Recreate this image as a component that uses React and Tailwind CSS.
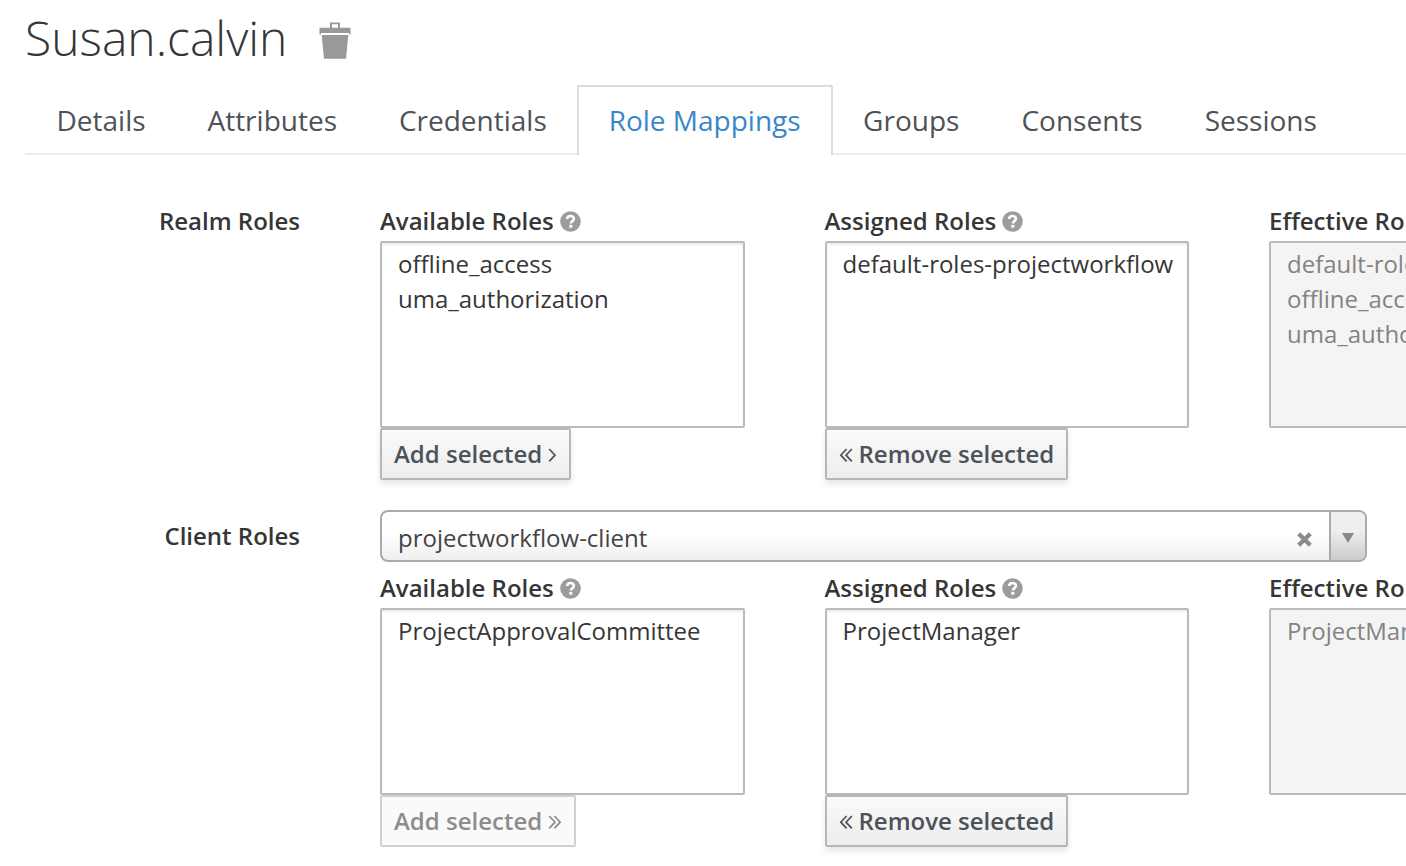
import React from "react";

const tabs = ["Details", "Attributes", "Credentials", "Role Mappings", "Groups", "Consents", "Sessions"];

function HelpIcon() {
  return (
    <svg className="ml-[6px] h-[21px] w-[21px] shrink-0" viewBox="0 0 21 21">
      <circle cx="10.5" cy="10.5" r="10.3" fill="#9c9c9c" />
      <path d="M7.1 8C7.3 5.9 8.6 5 10.5 5c2 0 3.4 1.1 3.4 2.8 0 2.3-3 2.4-3 4.6" fill="none" stroke="#fff" strokeWidth="2.6" />
      <rect x="9.3" y="13.9" width="3" height="2.8" fill="#fff" />
    </svg>
  );
}

function Chevron({ dir, double }) {
  const d = double ? "M1.2 1 7 7.2 1.2 13.4M6.4 1l5.8 6.2-5.8 6.2" : "M1.2 1 7 7.2 1.2 13.4";
  return (
    <svg
      className={`mt-[2px] h-[15px] shrink-0 ${double ? "w-[14px]" : "w-[9px]"} ${dir === "left" ? "-scale-x-100" : ""}`}
      viewBox={double ? "0 0 14 15" : "0 0 9 15"}
      fill="none"
      stroke="currentColor"
      strokeWidth="1.7"
    >
      <path d={d} />
    </svg>
  );
}

function RoleButton({ label, dir, double, disabled }) {
  return (
    <button
      disabled={disabled}
      className={`flex h-[52px] items-center gap-[6px] self-start rounded-[2px] border-2 px-3 font-semibold whitespace-nowrap ${
        disabled
          ? "border-[#d1d1d1] bg-[#fafafa] text-[#8b8d8f]"
          : "border-[#b7b7b7] bg-linear-to-b from-[#fafafa] to-[#ededed] text-[#4d5258] shadow-[0_4px_6px_rgba(3,3,3,0.1)]"
      }`}
    >
      {dir === "left" && <Chevron dir={dir} double={double} />}
      <span>{label}</span>
      {dir === "right" && <Chevron dir={dir} double={double} />}
    </button>
  );
}

function RoleColumn({ title, help, roles, disabled, children }) {
  return (
    <div className="flex w-[364.5px] shrink-0 flex-col">
      <div className="flex h-10 items-center font-semibold whitespace-nowrap">
        <span>{title}</span>
        {help && <HelpIcon />}
      </div>
      <ul
        className={`h-[187px] rounded-[2px] border-2 border-[#bbb] px-4 pt-[3px] leading-[35px] ${
          disabled ? "bg-[#f4f4f4] text-[#838383]" : "bg-white shadow-[inset_0_2px_2px_rgba(3,3,3,0.075)]"
        }`}
      >
        {roles.map((role) => (
          <li key={role} className="whitespace-nowrap">{role}</li>
        ))}
      </ul>
      {children}
    </div>
  );
}

function RoleColumns({ available, assigned, effective, addDouble, addDisabled }) {
  return (
    <div className="flex gap-20">
      <RoleColumn title="Available Roles" help roles={available}>
        <RoleButton label="Add selected" dir="right" double={addDouble} disabled={addDisabled} />
      </RoleColumn>
      <RoleColumn title="Assigned Roles" help roles={assigned}>
        <RoleButton label="Remove selected" dir="left" double />
      </RoleColumn>
      <RoleColumn title="Effective Roles" help roles={effective} disabled />
    </div>
  );
}

export default function App() {
  return (
    <div className="h-[866px] w-full overflow-hidden bg-white font-['Open_Sans',sans-serif] text-[24px] leading-[40px] text-[#363636]">
      <header className="flex h-[85px] items-start pl-[25px]">
        <h1 className="pt-[5px] text-[48px] leading-[66px] font-light">Susan.calvin</h1>
        <svg className="mt-[22px] ml-[32px] h-[38px] w-[32px]" viewBox="0 0 32 38" fill="#999">
          <path fillRule="evenodd" d="M11 0.5h10v5.2h10.500v6.800h-1.500v-1.500h-28v1.500h-1.500V5.700H11zM13 2.300v3.400h6V2.300z" />
          <path d="M2.700 13h26.600L27 36.700H5z" />
        </svg>
      </header>

      <nav className="ml-[25px] flex h-[70px] text-[28px] text-[#4d5258]">
        {tabs.map((tab, index) =>
          tab === "Role Mappings" ? (
            <div key={tab} className="rounded-t-[2px] border-2 border-b-0 border-[#dcdcdc] pt-[13px] pr-[30px] pl-[29.500px] whitespace-nowrap text-[#3987c9]">
              {tab}
            </div>
          ) : (
            <div key={tab} className={`border-b-2 border-[#ececec] pt-[15px] whitespace-nowrap ${index < 3 ? "pr-[30.400px] pl-[31.500px]" : "pr-[31.500px] pl-[30.500px]"}`}>
              {tab}
            </div>
          )
        )}
        <div className="flex-1 border-b-2 border-[#ececec]" />
      </nav>

      <main className="flex flex-col gap-[30px] pt-[46px]">
        <section className="flex gap-20">
          <div className="w-[300px] shrink-0 text-right font-semibold">Realm Roles</div>
          <RoleColumns
            available={["offline_access", "uma_authorization"]}
            assigned={["default-roles-projectworkflow"]}
            effective={["default-roles-projectworkflow", "offline_access", "uma_authorization"]}
          />
        </section>

        <section className="flex gap-20">
          <div className="w-[300px] shrink-0 pt-[6px] text-right font-semibold">Client Roles</div>
          <div className="flex flex-col gap-[6px]">
            <div className="flex h-[52px] w-[987px] overflow-hidden rounded-[8px] border-2 border-[#aaa] bg-linear-to-b from-white from-50% to-[#eee]">
              <div className="flex-1 pt-[6px] pl-4 text-[#444]">projectworkflow-client</div>
              <svg className="mt-[20px] mr-[17px] h-[15px] w-[15px]" viewBox="0 0 15 15" stroke="#8a8a8a" strokeWidth="4.300" strokeLinecap="square">
                <path d="M3.200 3.200l8.600 8.600M11.800 3.200l-8.600 8.600" />
              </svg>
              <div className="w-[36px] border-l-2 border-[#aaa] bg-linear-to-b from-[#eee] from-40% to-[#ccc]">
                <svg className="mt-[21px] ml-[11px] h-[10px] w-[12px]" viewBox="0 0 12 10" fill="#888">
                  <path d="M0 0h12L6 10z" />
                </svg>
              </div>
            </div>
            <RoleColumns
              available={["ProjectApprovalCommittee"]}
              assigned={["ProjectManager"]}
              effective={["ProjectManager"]}
              addDouble
              addDisabled
            />
          </div>
        </section>
      </main>
    </div>
  );
}
